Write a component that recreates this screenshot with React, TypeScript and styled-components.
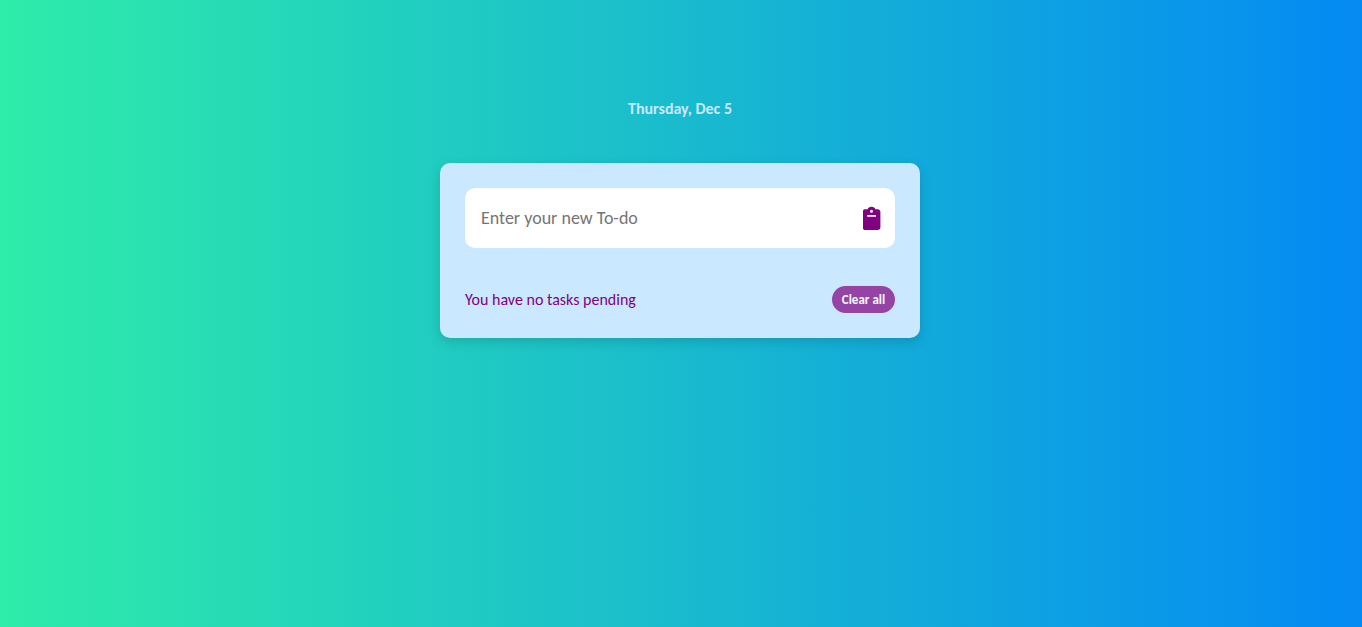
import { useState } from "react";
import type { FormEvent } from "react";
import styled, { createGlobalStyle } from "styled-components";

const GlobalStyle = createGlobalStyle`
  * {
    box-sizing: border-box;
  }

  body {
    margin: 0;
    min-height: 100vh;
    font-family: Carlito, Calibri, Lato, sans-serif;
    background: linear-gradient(to right, #2eeca9, #048af3);
  }

  button,
  input {
    font-family: inherit;
  }
`;

const Page = styled.main`
  display: flex;
  flex-direction: column;
  align-items: center;
  gap: 44px;
  padding: 99px 22px 40px 20px;
`;

const Today = styled.h1`
  margin: 0;
  font-size: 16px;
  line-height: 20px;
  font-weight: 600;
  color: #cae8ff;
`;

const Card = styled.section`
  width: 100%;
  max-width: 480px;
  padding: 25px;
  border-radius: 10px;
  background: #cae8ff;
  box-shadow: 0 4px 12px rgba(0, 0, 0, 0.15);
`;

const EntryForm = styled.form`
  display: flex;
  align-items: center;
  height: 60px;
  padding: 0 14px 0 16px;
  border-radius: 10px;
  background: #fff;
`;

const EntryInput = styled.input`
  flex: 1;
  min-width: 0;
  padding: 0;
  border: 0;
  outline: 0;
  font-size: 18px;
  line-height: 24px;
  background: transparent;

  &::placeholder {
    color: #757575;
  }
`;

const AddButton = styled.button`
  display: flex;
  padding: 0;
  border: 0;
  color: purple;
  background: transparent;
  cursor: pointer;

  svg {
    width: 18px;
    height: 24px;
  }
`;

const TaskList = styled.ul`
  margin: 0;
  padding: 0;
  list-style: none;
  color: purple;
`;

const Task = styled.li`
  padding-top: 12px;
`;

const Footer = styled.footer`
  display: flex;
  align-items: center;
  justify-content: space-between;
  margin-top: 38px;
`;

const Summary = styled.p`
  margin: 0;
  font-size: 16px;
  line-height: 20px;
  color: purple;
`;

const ClearButton = styled.button`
  height: 27px;
  min-width: 63px;
  padding: 0 9px;
  border: 0;
  border-radius: 14px;
  font-size: 13px;
  line-height: 16px;
  font-weight: 600;
  color: #fff;
  background: purple;
  opacity: 0.7;
  cursor: pointer;
`;

function ClipboardIcon() {
  return (
    <svg viewBox="0 0 18 24" fill="currentColor" aria-hidden="true">
      <path d="M2.400 3.300h2.200C5 1.900 6.500 .800 8.500 .800S12 1.900 12.400 3.300H14.600c1.700 0 2.800 1.100 2.800 2.800V21.200c0 1.700-1.100 2.800-2.800 2.800H2.400C.700 24-.300 22.900-.300 21.200V6.100C-.300 4.400 .700 3.300 2.400 3.300zM8.500 3.800a1.500 1.500 0 1 0 0 3a1.500 1.500 0 1 0 0-3M4.200 9v1.700h8.800V9z" />
    </svg>
  );
}

export default function App() {
  const [draft, setDraft] = useState("");
  const [tasks, setTasks] = useState<string[]>([]);

  const addTask = (event: FormEvent) => {
    event.preventDefault();
    if (draft.trim()) {
      setTasks([...tasks, draft.trim()]);
      setDraft("");
    }
  };

  return (
    <>
      <GlobalStyle />
      <Page>
        <Today>Thursday, Dec 5</Today>
        <Card>
          <EntryForm onSubmit={addTask}>
            <EntryInput
              aria-label="New to-do"
              placeholder="Enter your new To-do"
              value={draft}
              onChange={(event) => setDraft(event.target.value)}
            />
            <AddButton type="submit" aria-label="Add to-do">
              <ClipboardIcon />
            </AddButton>
          </EntryForm>
          <TaskList>
            {tasks.map((task, index) => (
              <Task key={index}>{task}</Task>
            ))}
          </TaskList>
          <Footer>
            <Summary>You have {tasks.length || "no"} tasks pending</Summary>
            <ClearButton type="button" onClick={() => setTasks([])}>
              Clear all
            </ClearButton>
          </Footer>
        </Card>
      </Page>
    </>
  );
}
